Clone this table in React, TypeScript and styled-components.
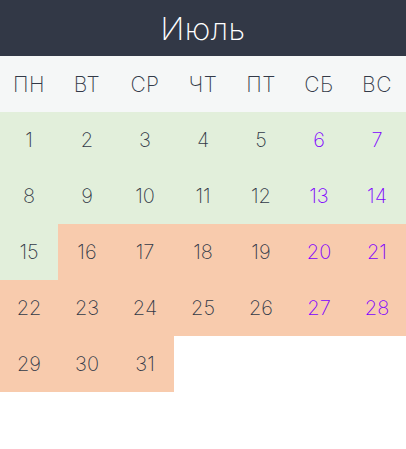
import React from "react";
import styled, { createGlobalStyle } from "styled-components";

const Global = createGlobalStyle`
  html, body { margin: 0; padding: 0; background: #ffffff; }
  body { font-family: "Inter", "Liberation Sans", sans-serif; }
`;

const Wrap = styled.div`
  width: 406px;
`;

const Header = styled.div`
  height: 56px;
  background: #323846;
  color: #ffffff;
  display: flex;
  align-items: center;
  justify-content: center;
  font-size: 31px;
  font-weight: 200;
  letter-spacing: 0.5px;
`;

const Grid = styled.div`
  display: grid;
  grid-template-columns: repeat(7, 58px);
  grid-auto-rows: 56px;
`;

const WeekRow = styled(Grid)`
  background: #f5f7f7;
`;

const WeekDay = styled.div`
  display: flex;
  align-items: center;
  justify-content: center;
  font-size: 21px;
  font-weight: 200;
  color: #333a48;
  letter-spacing: 0.5px;
`;

type Tone = "green" | "peach" | "none";

const Day = styled.div<{ $tone: Tone; $weekend: boolean }>`
  display: flex;
  align-items: center;
  justify-content: center;
  font-size: 20px;
  font-weight: 250;
  background: ${(p) =>
    p.$tone === "green" ? "#e2efdb" : p.$tone === "peach" ? "#f8cbad" : "transparent"};
  color: ${(p) => (p.$weekend ? "#8000ff" : "#333a48")};
`;

const weekdays = ["ПН", "ВТ", "СР", "ЧТ", "ПТ", "СБ", "ВС"];

export default function App() {
  const days = Array.from({ length: 31 }, (_, i) => i + 1);
  return (
    <Wrap>
      <Global />
      <Header>Июль</Header>
      <WeekRow>
        {weekdays.map((w) => (
          <WeekDay key={w}>{w}</WeekDay>
        ))}
      </WeekRow>
      <Grid>
        {days.map((d) => {
          const col = (d - 1) % 7;
          return (
            <Day key={d} $tone={d <= 15 ? "green" : "peach"} $weekend={col >= 5}>
              {d}
            </Day>
          );
        })}
      </Grid>
    </Wrap>
  );
}
